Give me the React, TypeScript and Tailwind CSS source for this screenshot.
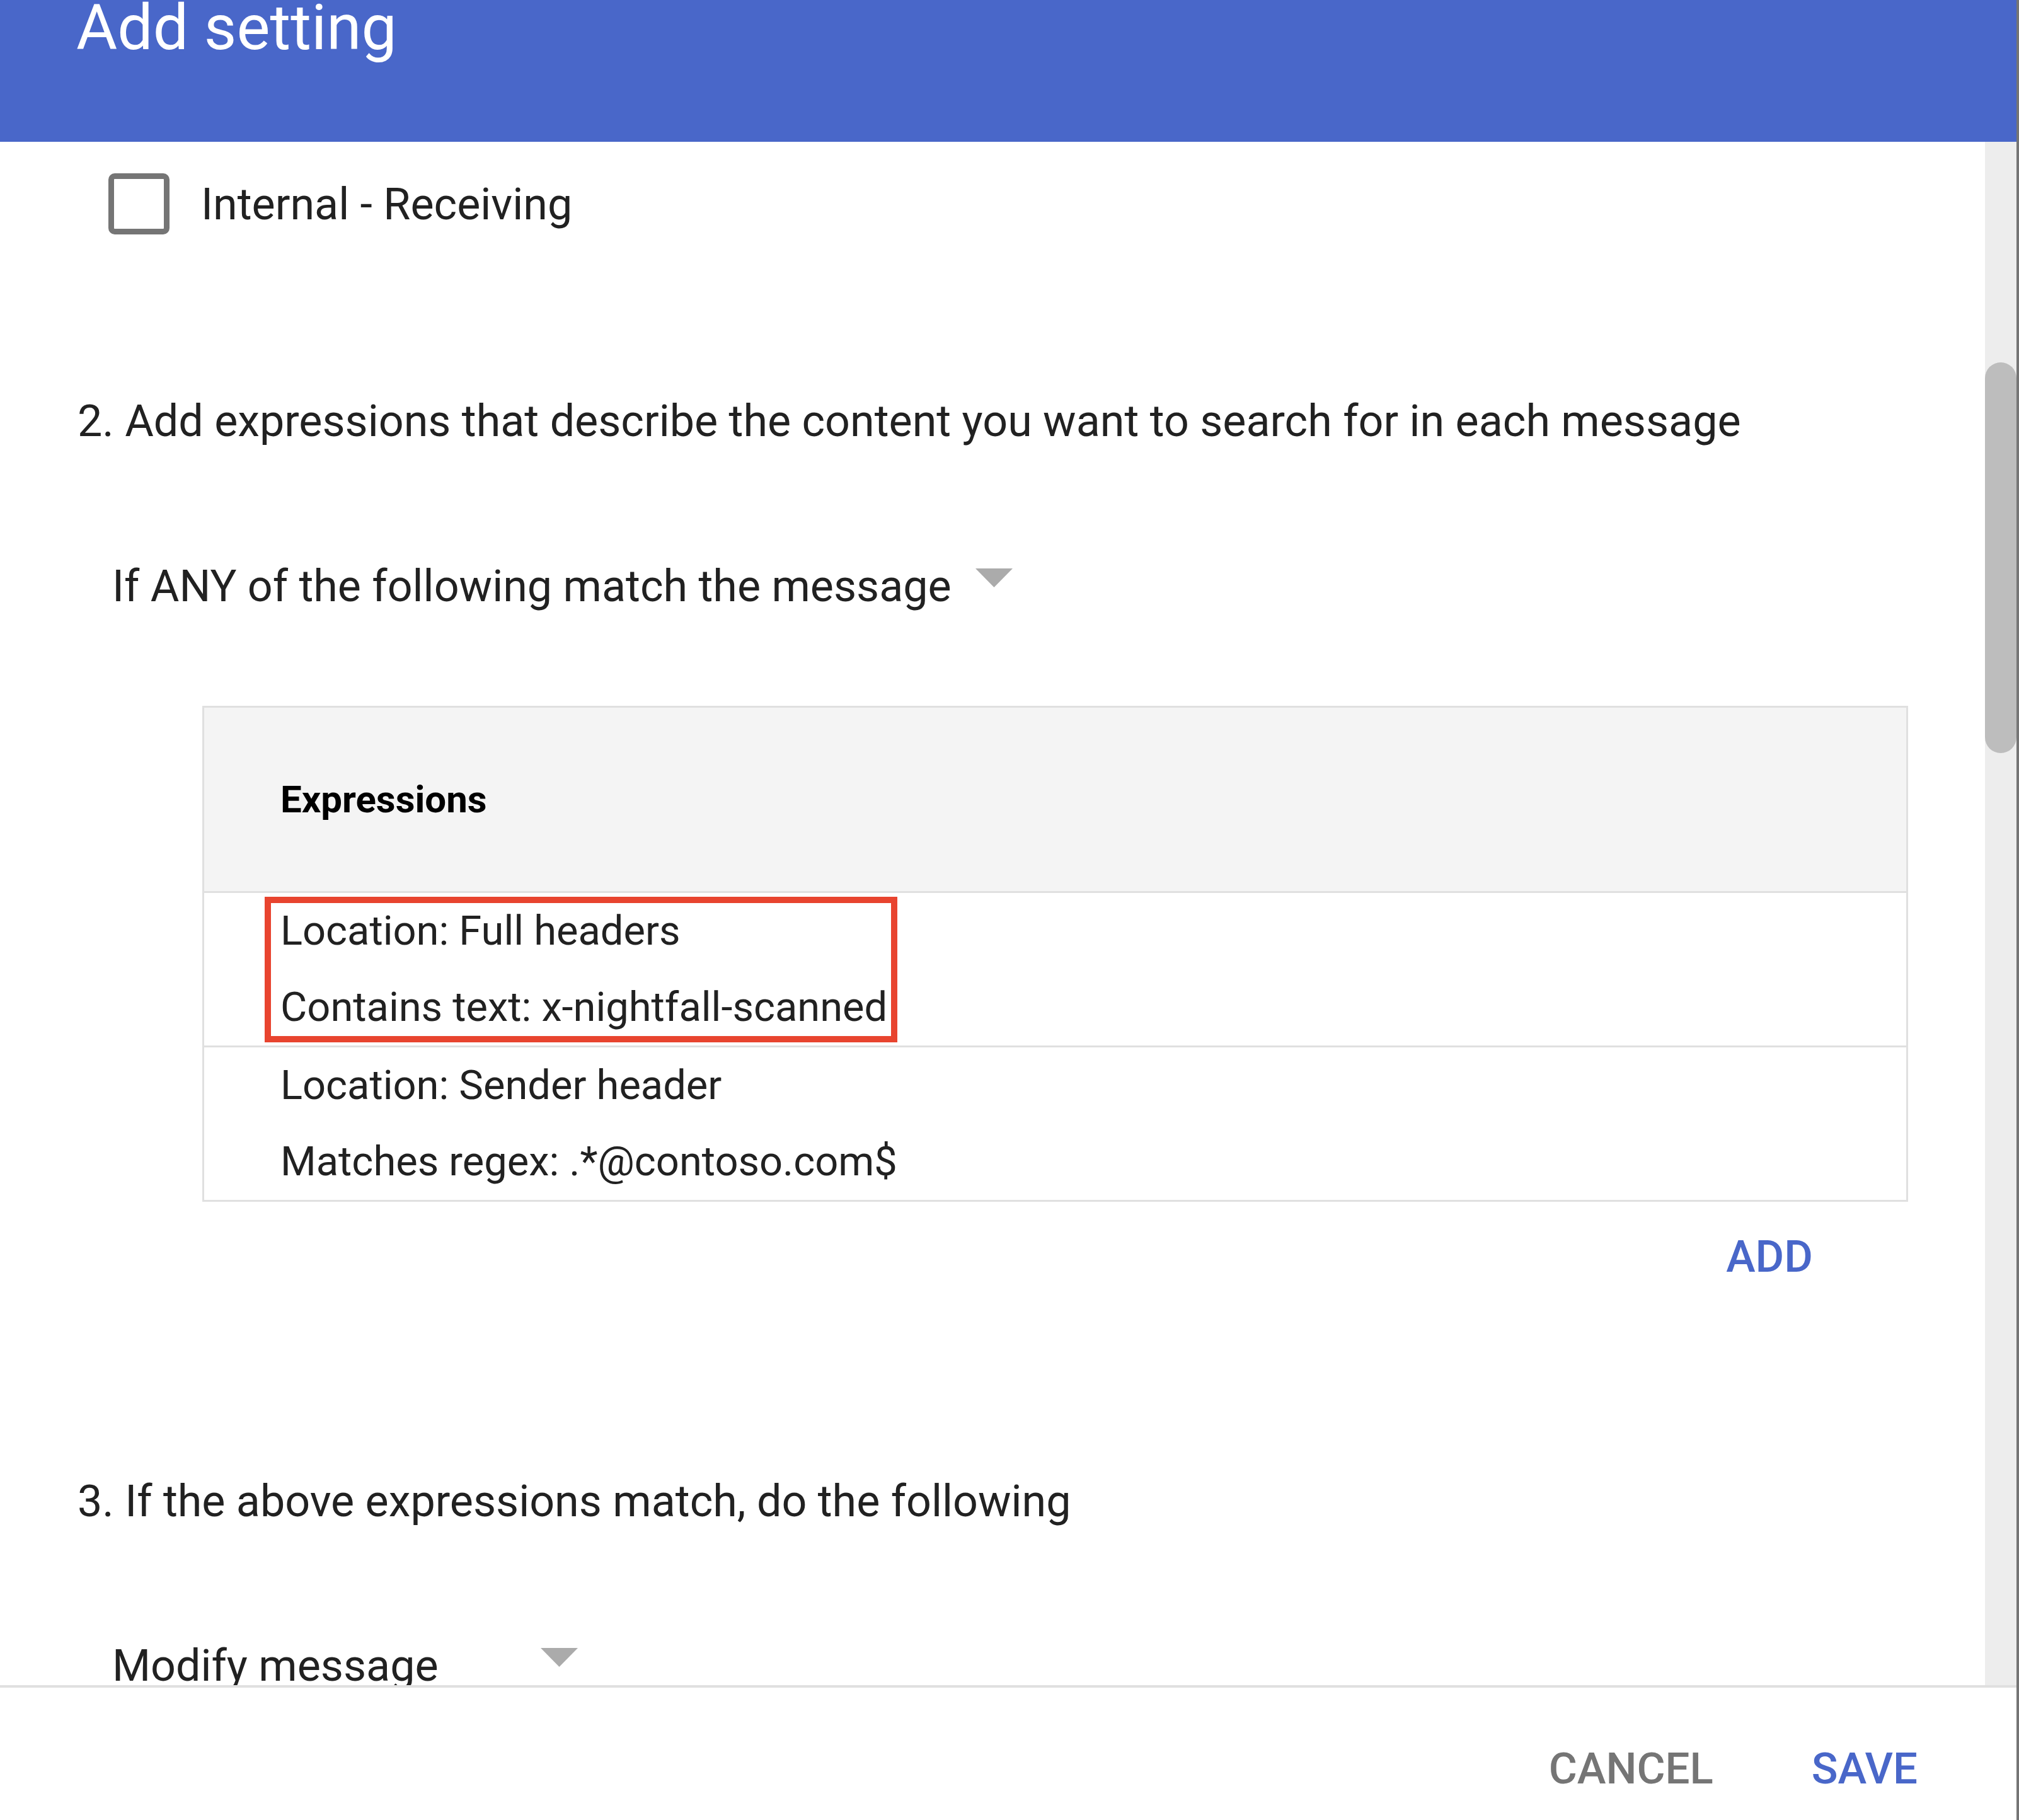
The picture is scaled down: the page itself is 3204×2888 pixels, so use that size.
import React from "react";

const Caret = () => (
  <svg width="59" height="30" viewBox="0 0 59 30" className="shrink-0">
    <polygon points="0,0 59,0 29.5,30" fill="#ababab" />
  </svg>
);

const rows = [
  ["Location: Full headers", "Contains text: x-nightfall-scanned"],
  ["Location: Sender header", "Matches regex: .*@contoso.com$"],
];

const App = () => {
  return (
    <div className="flex w-[3204px] h-[2888px] bg-white text-[#212121] font-['Roboto',sans-serif] overflow-hidden">
      <div className="flex flex-col w-[3200px] h-full">
        <div className="h-[225px] shrink-0 bg-[#4967c9] pl-[121px]">
          <h1 className="text-[100px] leading-[88px] text-white font-normal">Add setting</h1>
        </div>

        <div className="flex h-[2449px] shrink-0">
          <div className="flex-1 overflow-hidden pl-[123px]">
            <div className="flex items-center mt-[50px] ml-[49px] gap-[50px]">
              <div className="w-[97px] h-[97px] border-[9px] border-[#757575] rounded-[10px]" />
              <span className="text-[70px] leading-none">Internal - Receiving</span>
            </div>

            <p className="mt-[261px] text-[70px] leading-none">
              2. Add expressions that describe the content you want to search for in each message
            </p>

            <div className="flex items-start gap-[38px] mt-[192px] ml-[55px]">
              <span className="text-[70px] leading-none">If ANY of the following match the message</span>
              <div className="mt-[7px]">
                <Caret />
              </div>
            </div>

            <div className="mt-[155px] ml-[198px] w-[2707px] border-[3px] border-[#e0e0e0]">
              <div className="h-[294px] flex items-center pl-[121px] bg-[#f4f4f4] border-b-[3px] border-[#e0e0e0]">
                <span className="text-[60px] font-bold text-black">Expressions</span>
              </div>
              {rows.map((r, i) => (
                <div
                  key={i}
                  className={`relative pl-[121px] text-[65px] leading-[121px] ${
                    i === 0 ? "border-b-[3px] border-[#e0e0e0]" : ""
                  }`}
                >
                  <div>{r[0]}</div>
                  <div>{r[1]}</div>
                  {i === 0 && (
                    <div className="absolute left-[96px] top-[6px] w-[1004px] h-[231px] border-[10px] border-[#e8442f]" />
                  )}
                </div>
              ))}
            </div>

            <div className="flex justify-end mt-[52px] ml-[198px] w-[2707px] pr-[151px]">
              <span className="text-[70px] leading-none font-medium text-[#4967c9]">ADD</span>
            </div>

            <p className="mt-[318px] text-[70px] leading-none">3. If the above expressions match, do the following</p>

            <div className="flex items-start mt-[191px] ml-[55px]">
              <span className="w-[680px] text-[70px] leading-none">Modify message</span>
              <div className="mt-[7px]">
                <Caret />
              </div>
            </div>
          </div>

          <div className="w-[50px] shrink-0 bg-[#ededed]">
            <div className="mt-[350px] h-[620px] rounded-full bg-[#bdbdbd]" />
          </div>
        </div>

        <div className="h-[4px] shrink-0 bg-[#e0e0e0]" />

        <div className="flex justify-end items-start gap-[156px] pr-[157px] pt-[94px]">
          <span className="text-[69px] leading-none font-medium text-[#757575]">CANCEL</span>
          <span className="text-[69px] leading-none font-medium text-[#4967c9]">SAVE</span>
        </div>
      </div>
      <div className="w-[4px] h-full bg-[#757575]" />
    </div>
  );
};

export default App;
